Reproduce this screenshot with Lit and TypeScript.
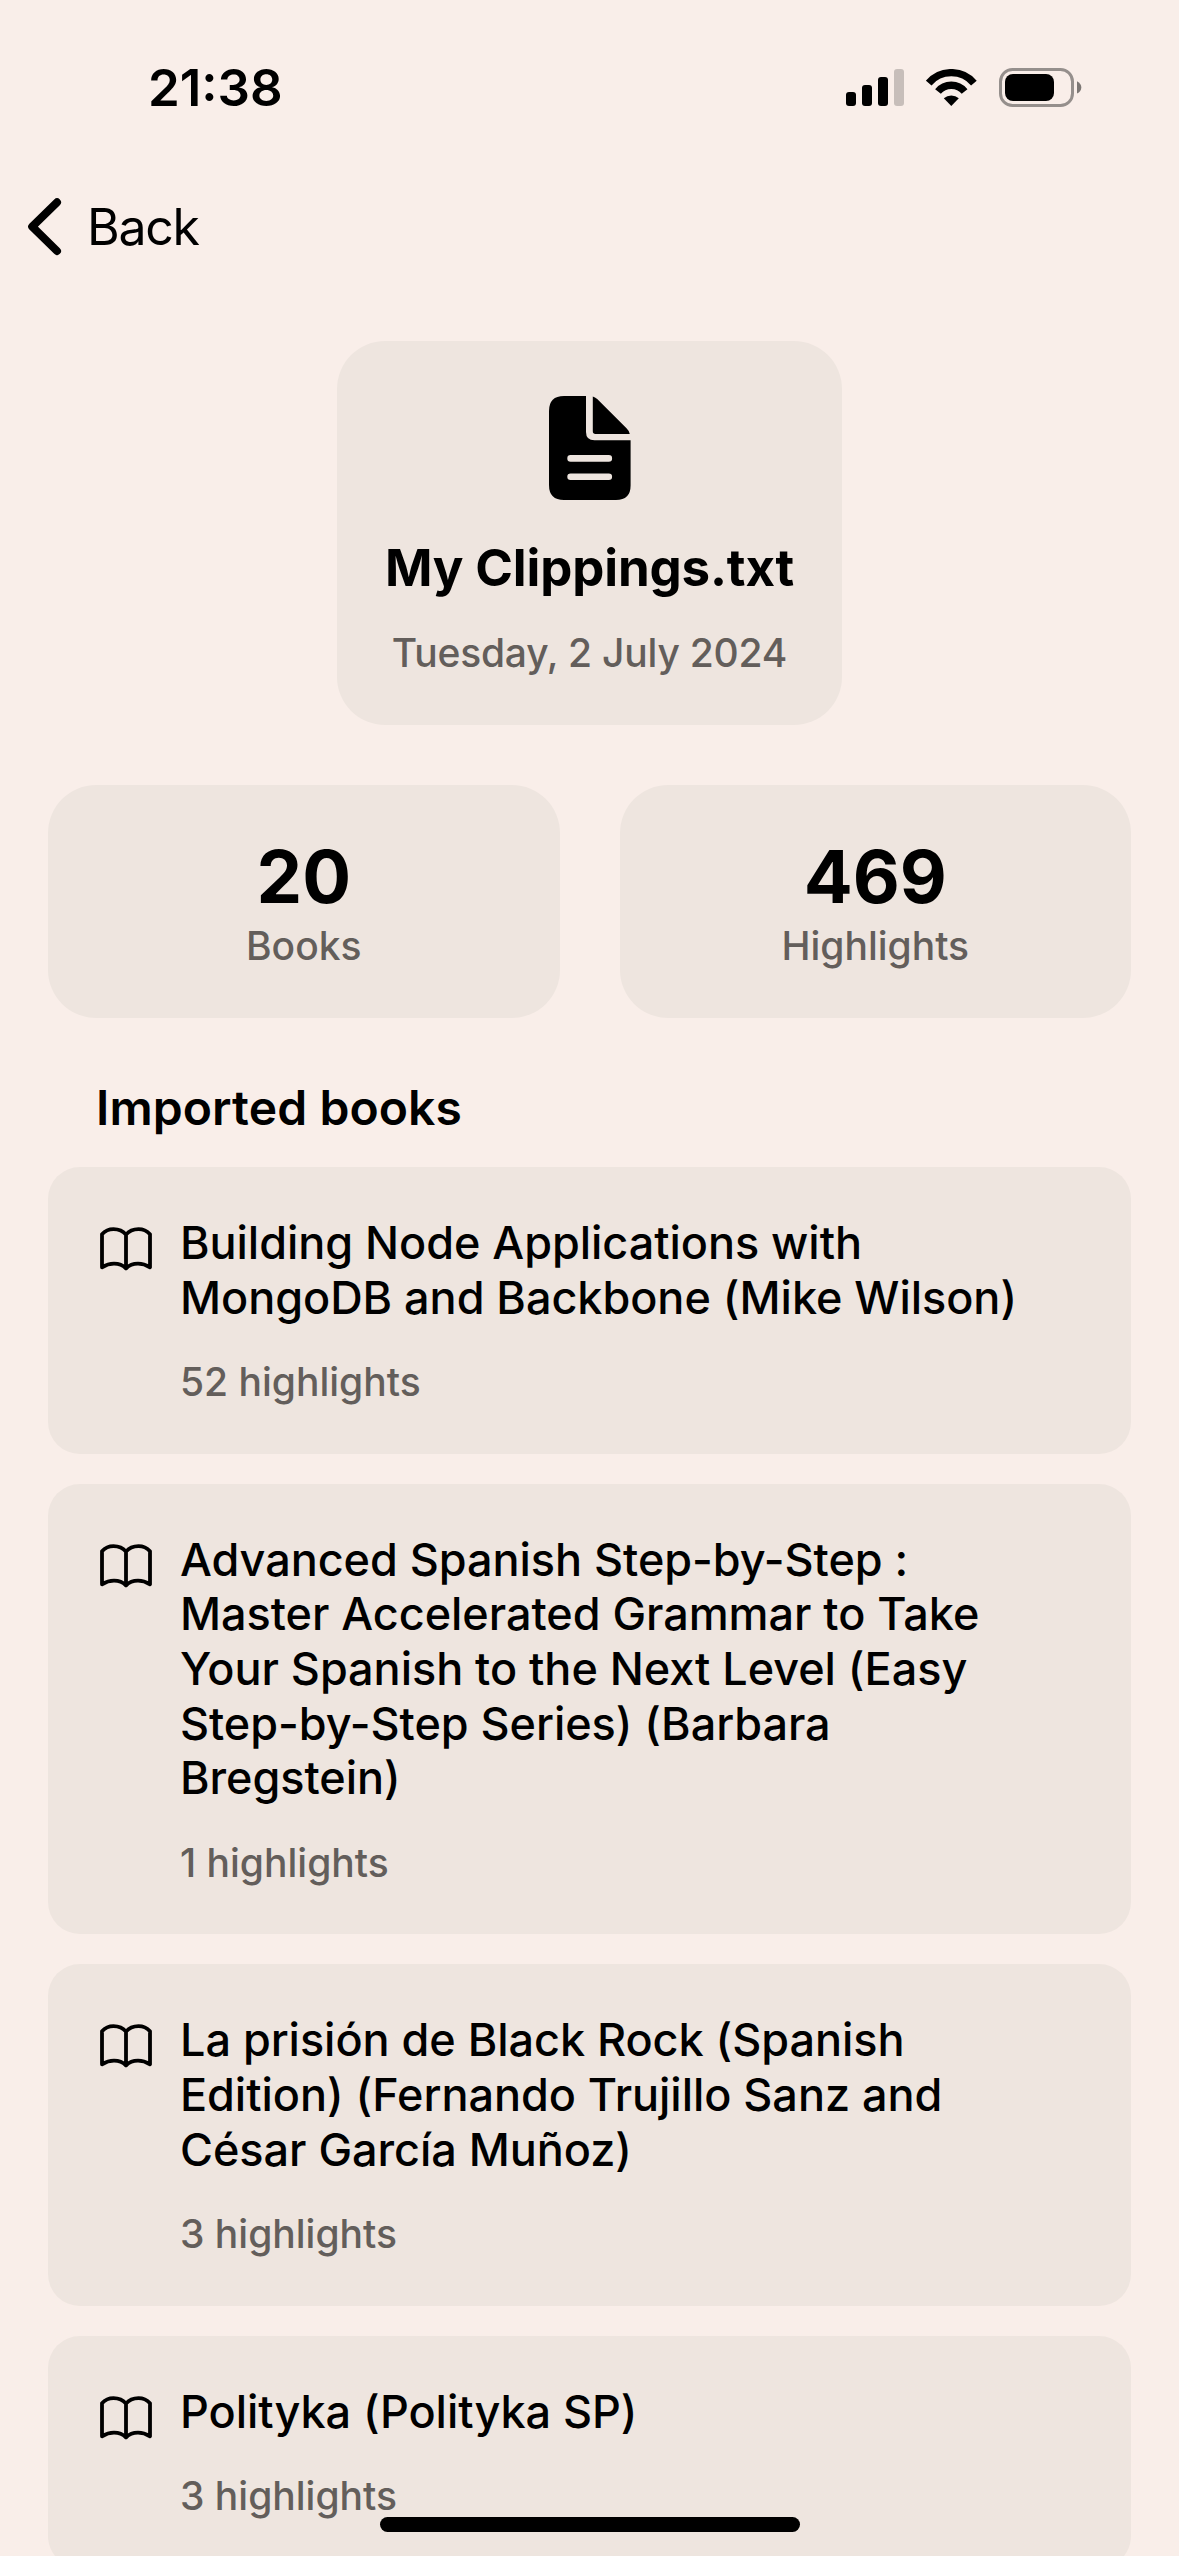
import { LitElement, html, css } from "lit";
import { customElement } from "lit/decorators.js";

interface Book { lines: string[]; count: number; }

const books: Book[] = [
  { lines: ["Building Node Applications with", "MongoDB and Backbone (Mike Wilson)"], count: 52 },
  { lines: ["Advanced Spanish Step-by-Step :", "Master Accelerated Grammar to Take", "Your Spanish to the Next Level (Easy", "Step-by-Step Series) (Barbara", "Bregstein)"], count: 1 },
  { lines: ["La prisión de Black Rock (Spanish", "Edition) (Fernando Trujillo Sanz and", "César García Muñoz)"], count: 3 },
  { lines: ["Polityka (Polityka SP)"], count: 3 },
];

@customElement("app-root")
export class AppRoot extends LitElement {
  static styles = css`
    :host { display: block; }
    * { box-sizing: border-box; }
    .screen { position: relative; width: 1179px; height: 2556px; overflow: hidden; background: #f9eee9; color: #000; font-family: Inter, "Liberation Sans", sans-serif; display: flex; flex-direction: column; }
    .status { height: 176px; flex: none; padding: 0 97px 0 148px; display: flex; justify-content: space-between; align-items: center; }
    .time { font-size: 51px; font-weight: 600; line-height: 60px; }
    .icons { display: flex; gap: 22px; align-items: center; }
    svg { display: block; flex: none; }
    .nav { height: 102px; flex: none; display: flex; align-items: center; padding-left: 26px; gap: 24px; font-size: 50px; letter-spacing: -1.3px; }
    .file { margin: 63px auto 0; width: 505px; height: 384px; flex: none; border-radius: 48px; background: #eee5df; display: flex; flex-direction: column; align-items: center; padding-top: 55px; }
    .name { font-size: 51px; font-weight: 700; line-height: 60px; margin-top: 38px; letter-spacing: -0.15px; white-space: nowrap; }
    .date { font-size: 39px; font-weight: 500; line-height: 48px; margin-top: 31px; letter-spacing: -0.22px; color: #635e5b; white-space: nowrap; }
    .stats { display: flex; gap: 60px; margin: 60px 48px 0; flex: none; }
    .stat { flex: 1; height: 233px; border-radius: 48px; background: #eee5df; display: flex; flex-direction: column; align-items: center; padding-top: 48px; }
    .num { font-size: 72.5px; font-weight: 700; line-height: 88px; }
    .lab { font-size: 39px; font-weight: 500; line-height: 48px; margin-top: 1px; color: #635e5b; }
    h2 { margin: 60px 0 0 96px; font-size: 48px; line-height: 60px; font-weight: 600; flex: none; height: 89px; letter-spacing: 0.1px; }
    .list { display: flex; flex-direction: column; gap: 30px; padding: 0 48px; }
    .book { flex: none; border-radius: 32px; background: #eee5df; padding: 49px 48px 47.3px 51px; display: flex; gap: 27px; }
    .book svg { margin-top: 10px; }
    .title { font-size: 45px; line-height: 54.67px; font-weight: 500; letter-spacing: -0.04px; white-space: nowrap; }
    .count { font-size: 39px; font-weight: 500; line-height: 48px; color: #635e5b; margin-top: 33px; white-space: nowrap; }
    .home { position: absolute; left: 380px; top: 2517px; width: 420px; height: 15px; border-radius: 8px; background: #000; }
  `;

  render() {
    return html`<main class="screen">
      <div class="status"><div class="time">21:38</div><div class="icons">
        <svg width="58" height="38" viewBox="0 0 58 38"><rect y="23" width="10" height="14" rx="3"/><rect x="16" y="16" width="10" height="21" rx="3"/><rect x="32" y="8" width="10" height="29" rx="3"/><rect x="48" width="10" height="37" rx="3" opacity=".2"/></svg>
        <svg width="51" height="38" viewBox="0 0 51 38"><path d="M2.7 14.1A29.7 29.7 0 0 1 47.9 14.1M12 22.5A17.2 17.2 0 0 1 38.6 22.5" fill="none" stroke="#000" stroke-width="7.4"/><path d="M17.8 29.3A11.5 11.5 0 0 1 32.8 29.3L25.3 37Z"/></svg>
        <svg width="83" height="40" viewBox="0 0 83 40"><rect x="1.5" y="1.5" width="72" height="36" rx="12" fill="none" stroke="#000" stroke-opacity=".4" stroke-width="3"/><rect x="6" y="6" width="49" height="27" rx="8"/><path d="M78 13.3Q82.3 15.5 82.3 19.5T78 25.5Z" opacity=".5"/></svg>
      </div></div>
      <div class="nav"><svg width="37" height="60" viewBox="0 0 37 60" fill="none" stroke="#000" stroke-width="8" stroke-linecap="round" stroke-linejoin="round"><path d="M31 5.3L6.2 29.6L31 54"/></svg>Back</div>
      <section class="file"><svg width="82" height="104" viewBox="0 0 82 104"><path d="M15 0H37V36Q37 44.3 45.5 44.3H81.6V89.5Q81.6 104 67 104H15Q0 104 0 89V15Q0 0 15 0Z"/><path d="M43.8 .5Q46 1 48.2 3L77.5 32.3Q80.3 35 80.8 38H46.5Q43.8 38 43.8 35.3Z"/><path d="M21.6 62.4H59.8M21.6 80.7H59.8" stroke="#eee5df" stroke-width="6.6" stroke-linecap="round"/></svg><div class="name">My Clippings.txt</div><div class="date">Tuesday, 2 July 2024</div></section>
      <section class="stats"><div class="stat"><div class="num">20</div><div class="lab">Books</div></div><div class="stat"><div class="num">469</div><div class="lab">Highlights</div></div></section>
      <h2>Imported books</h2>
      <section class="list">${books.map(b => html`<article class="book"><svg width="54" height="45" viewBox="0 0 54 45" fill="none" stroke="#000" stroke-width="3.8" stroke-linecap="round" stroke-linejoin="round"><path d="M27 8.6C24 5 19.5 3.2 14.5 3.2C10 3.2 6 5 3 8.3V41.3C7 38.8 11 37.6 15 37.6C19.5 37.6 24 39.3 27 42.4C30 39.3 34.5 37.6 39 37.6C43 37.6 47 38.8 51 41.3V8.3C48 5 44 3.2 39.5 3.2C34.5 3.2 30 5 27 8.6V42.4"/></svg><div>${b.lines.map(l => html`<div class="title">${l}</div>`)}<div class="count">${b.count} highlights</div></div></article>`)}</section>
      <div class="home"></div>
    </main>`;
  }
}
